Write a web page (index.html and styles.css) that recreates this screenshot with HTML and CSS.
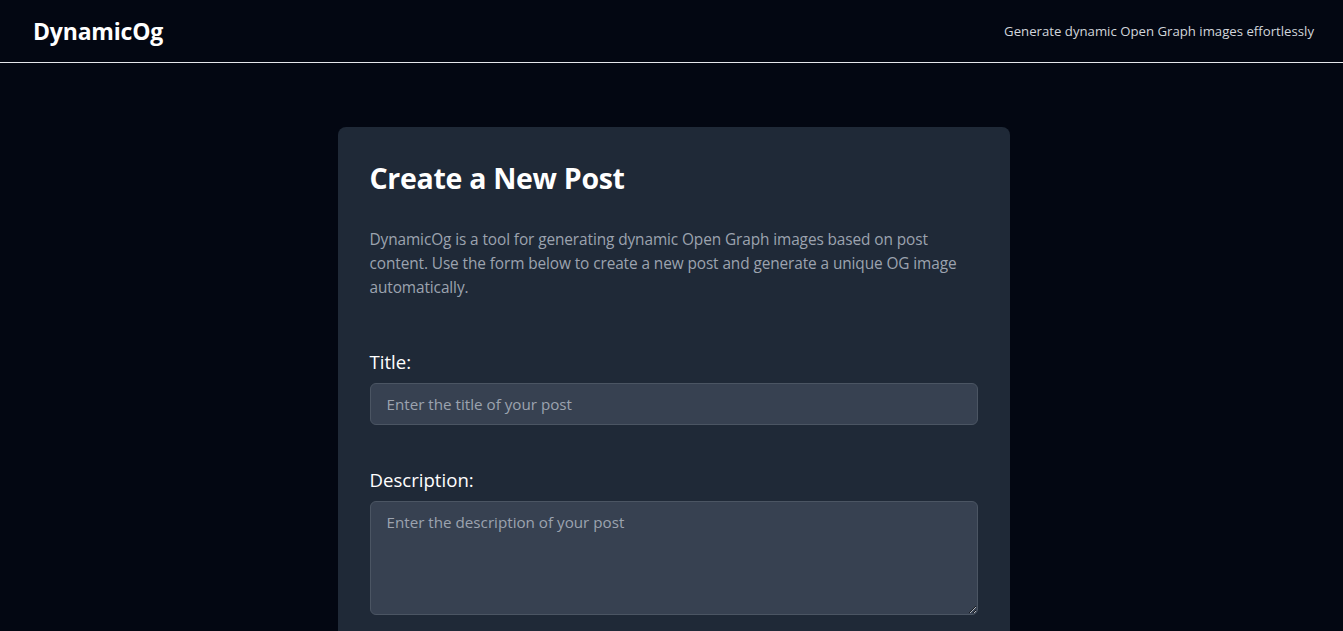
FILE: index.html
```html
<!DOCTYPE html>
<html lang="en">
<head>
<meta charset="utf-8">
<title>DynamicOg</title>
<link rel="stylesheet" href="styles.css">
</head>
<body>
<header class="site-header">
  <div class="logo">DynamicOg</div>
  <div class="tagline">Generate dynamic Open Graph images effortlessly</div>
</header>
<main class="main">
  <section class="card">
    <h1 class="card-title">Create a New Post</h1>
    <p class="card-intro">DynamicOg is a tool for generating dynamic Open Graph images based on post content. Use the form below to create a new post and generate a unique OG image automatically.</p>
    <form class="form">
      <div class="field">
        <label class="label" for="title">Title:</label>
        <input class="input" id="title" type="text" placeholder="Enter the title of your post">
      </div>
      <div class="field">
        <label class="label" for="desc">Description:</label>
        <textarea class="textarea" id="desc" placeholder="Enter the description of your post"></textarea>
      </div>
    </form>
  </section>
</main>
</body>
</html>
```
FILE: styles.css
```css
* { box-sizing: border-box; }
html, body { margin: 0; padding: 0; }
body {
  background: #030712;
  color: #fff;
  font-family: "Open Sans", "Noto Sans", sans-serif;
}
.site-header {
  height: 63px;
  display: flex;
  align-items: center;
  justify-content: space-between;
  padding: 0 29px 0 33px;
  border-bottom: 1px solid #e5e7eb;
}
.logo {
  font-size: 23px;
  font-weight: 700;
  letter-spacing: -0.2px;
}
.tagline {
  font-size: 13.2px;
  color: #d1d5db;
}
.main {
  display: flex;
  justify-content: center;
  padding-top: 64px;
  padding-left: 4px;
}
.card {
  width: 672px;
  background: #1f2937;
  border-radius: 8px;
  padding: 32px;
}
.card-title {
  margin: 0 0 31px;
  font-size: 28.5px;
  line-height: 38px;
  font-weight: 700;
  letter-spacing: -0.3px;
}
.card-intro {
  margin: 0 0 48px;
  font-size: 15.4px;
  line-height: 24px;
  color: #9ca3af;
  letter-spacing: -0.1px;
}
.form {
  display: flex;
  flex-direction: column;
  gap: 41px;
}
.field {
  display: flex;
  flex-direction: column;
  gap: 7px;
}
.label {
  font-size: 18.6px;
  line-height: 28px;
  color: #fff;
}
.input, .textarea {
  width: 100%;
  background: #374151;
  border: 1px solid #4b5563;
  border-radius: 6px;
  color: #fff;
  font-family: inherit;
  font-size: 15.2px;
  padding: 8px 16px;
  outline: none;
}
.input { height: 42px; }
.textarea { height: 114px; padding-top: 10px; resize: vertical; display: block; }
.input::placeholder, .textarea::placeholder { color: #9ca3af; }
```
